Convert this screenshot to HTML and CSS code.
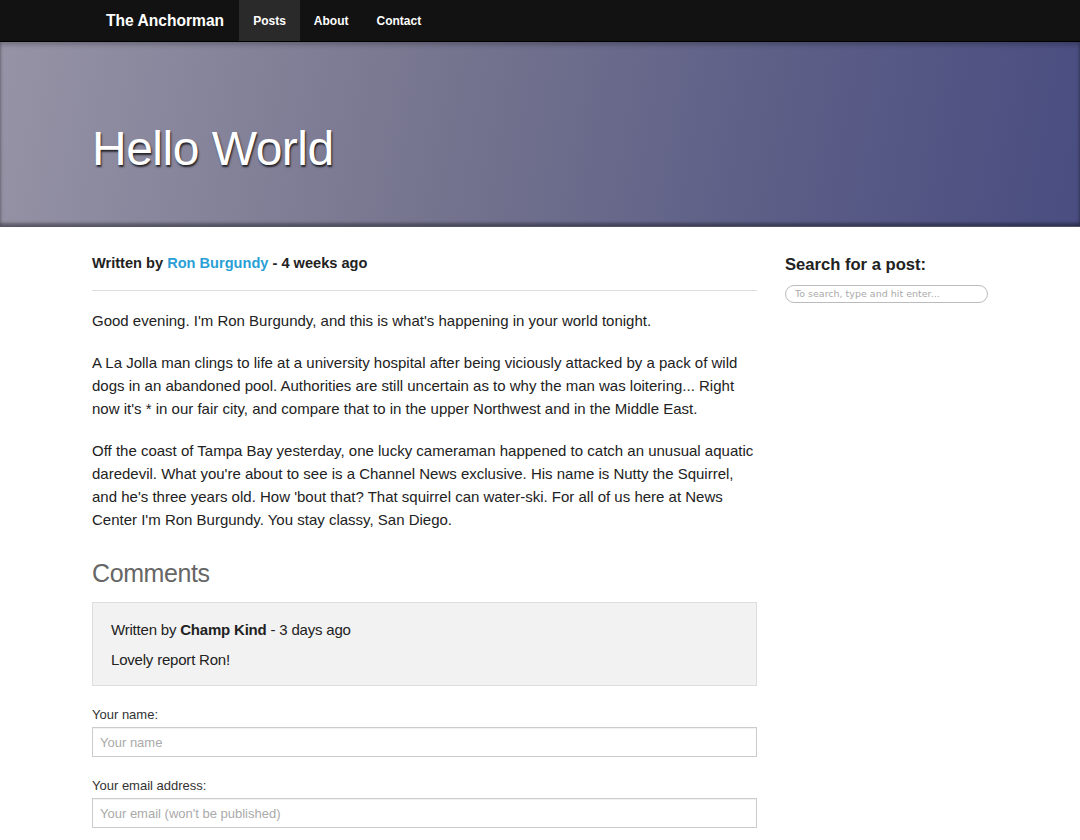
FILE: index.html
```html
<!DOCTYPE html>
<html lang="en">
<head>
<meta charset="utf-8">
<title>Hello World - The Anchorman</title>
<link rel="stylesheet" href="styles.css">
</head>
<body>
<header class="navbar">
  <div class="nav-inner">
    <a class="brand" href="#">The Anchorman</a>
    <nav class="nav">
      <a class="nav-link active" href="#">Posts</a>
      <a class="nav-link" href="#">About</a>
      <a class="nav-link" href="#">Contact</a>
    </nav>
  </div>
</header>
<section class="hero">
  <h1 class="hero-title">Hello World</h1>
</section>
<div class="container">
  <main class="main">
    <p class="byline">Written by <a href="#" class="author">Ron Burgundy</a> - 4 weeks ago</p>
    <hr class="rule">
    <div class="post-body">
      <p>Good evening. I'm Ron Burgundy, and this is what's happening in your world tonight.</p>
      <p>A La Jolla man clings to life at a university hospital after being viciously attacked by a pack of wild dogs in an abandoned pool. Authorities are still uncertain as to why the man was loitering... Right now it's * in our fair city, and compare that to in the upper Northwest and in the Middle East.</p>
      <p>Off the coast of Tampa Bay yesterday, one lucky cameraman happened to catch an unusual aquatic daredevil. What you're about to see is a Channel News exclusive. His name is Nutty the Squirrel, and he's three years old. How 'bout that? That squirrel can water-ski. For all of us here at News Center I'm Ron Burgundy. You stay classy, San Diego.</p>
    </div>
    <h2 class="comments-title">Comments</h2>
    <div class="comment">
      <p class="comment-meta">Written by <strong>Champ Kind</strong> - 3 days ago</p>
      <p class="comment-text">Lovely report Ron!</p>
    </div>
    <form class="comment-form">
      <label class="field-label" for="name">Your name:</label>
      <input class="field" id="name" type="text" placeholder="Your name">
      <label class="field-label" for="email">Your email address:</label>
      <input class="field" id="email" type="text" placeholder="Your email (won't be published)">
    </form>
  </main>
  <aside class="sidebar">
    <h3 class="side-title">Search for a post:</h3>
    <input class="search" type="text" placeholder="To search, type and hit enter...">
  </aside>
</div>
</body>
</html>
```

FILE: styles.css
```css
* { box-sizing: border-box; }
html, body { margin: 0; padding: 0; }
body {
  font-family: "Liberation Sans", Arial, Helvetica, sans-serif;
  color: #222;
  background: #fff;
}
a { text-decoration: none; }

.navbar {
  background: #121212;
  height: 42px;
  border-bottom: 1px solid #000;
}
.nav-inner {
  display: flex;
  align-items: stretch;
  height: 41px;
  padding-left: 106px;
}
.brand {
  color: #fff;
  font-weight: bold;
  font-size: 15.6px;
  line-height: 42px;
  margin-right: 15px;
}
.nav { display: flex; }
.nav-link {
  color: #fff;
  font-weight: bold;
  font-size: 12px;
  line-height: 42px;
  padding: 0 14px;
}
.nav-link.active { background: #2a2a2a; }

.hero {
  height: 185px;
  background: linear-gradient(100deg, #9693a6 0%, #76758f 40%, #5d5f87 70%, #494d80 100%);
  box-shadow: inset 0 3px 4px rgba(0,0,0,0.22), inset 0 -3px 3px rgba(0,0,0,0.35);
  border-bottom: 1px solid #55556a;
  display: flex;
  align-items: center;
  padding-left: 92px;
  padding-top: 28px;
}
.hero-title {
  margin: 0;
  color: #fff;
  font-weight: normal;
  font-size: 48px;
  letter-spacing: -0.5px;
  text-shadow: 1px 2px 2px rgba(0,0,0,0.75);
}

.container {
  display: flex;
  gap: 28px;
  padding: 0 92px;
}
.main { width: 665px; }
.sidebar { width: 203px; padding-top: 28px; }

.byline {
  margin: 28px 0 0;
  font-size: 14.6px;
  font-weight: bold;
  color: #222;
}
.author { color: #2a9fd6; }
.rule {
  border: 0;
  border-top: 1px solid #ddd;
  margin: 19px 0 18px;
}
.post-body p {
  font-size: 15px;
  line-height: 23px;
  margin: 0 0 19px;
  color: #222;
}
.comments-title {
  font-size: 25px;
  font-weight: normal;
  color: #666;
  margin: 28px 0 14px;
  letter-spacing: -0.4px;
}
.comment {
  background: #f2f2f2;
  border: 1px solid #ddd;
  padding: 16px 18px 14px;
}
.comment p {
  margin: 0;
  font-size: 15px;
  line-height: 22px;
  color: #222;
  letter-spacing: -0.2px;
}
.comment-meta { margin-bottom: 8px !important; }
.comment-form {
  display: flex;
  flex-direction: column;
  padding-top: 21px;
}
.field-label {
  font-size: 13px;
  color: #333;
  margin-bottom: 5px;
}
.field {
  height: 30px;
  border: 1px solid #ccc;
  box-shadow: inset 0 1px 1px rgba(0,0,0,0.06);
  font-family: inherit;
  font-size: 13px;
  padding: 4px 7px;
  margin-bottom: 21px;
  color: #555;
}
.field::placeholder { color: #aaa; }

.side-title {
  margin: 0 0 8px;
  font-size: 16.6px;
  font-weight: bold;
  color: #222;
}
.search {
  width: 203px;
  height: 18px;
  border: 1px solid #bbb;
  border-radius: 10px;
  font-family: "DejaVu Sans", sans-serif;
  font-size: 9.5px;
  padding: 0 9px;
}
.search::placeholder { color: #aaa; }
```
